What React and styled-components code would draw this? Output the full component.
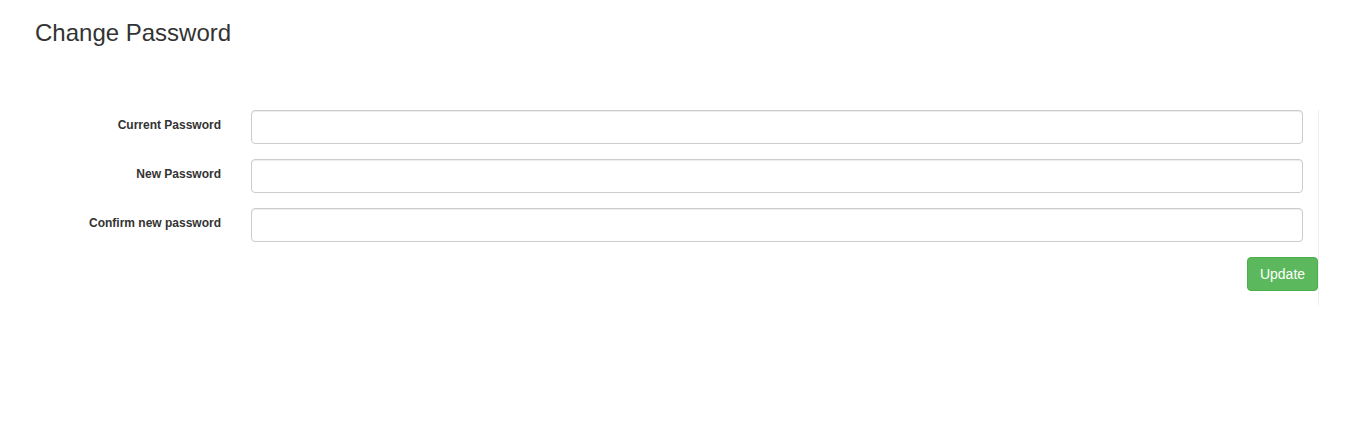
import React from 'react';
import styled, {createGlobalStyle} from "styled-components";

const GlobalStyle = createGlobalStyle`
    body {
        margin: 0;
        background: #fff;
        font-family: "Liberation Sans", Arial, sans-serif;
        color: #333;
    }
`;

const Page = styled.div`
    width: 1369px;
    height: 433px;
`;

const Title = styled.h3`
    margin: 0;
    padding: 20px 0 0 35px;
    font-size: 24px;
    font-weight: 400;
    line-height: 1.1;
    color: #333;
`;

const Form = styled.form`
    display: flex;
    flex-direction: column;
    gap: 15px;
    width: 1318px;
    margin-top: 64px;
    padding-bottom: 14px;
    border-right: 1px solid #eee;
`;

const Row = styled.div`
    display: grid;
    grid-template-columns: 221px 1fr;
    column-gap: 30px;
    padding-right: 15px;
`;

const Label = styled.label`
    padding-top: 7px;
    text-align: right;
    font-size: 12px;
    font-weight: 700;
    line-height: 17px;
    color: #333;
`;

const Input = styled.input`
    box-sizing: border-box;
    width: 100%;
    height: 34px;
    padding: 6px 12px;
    border: 1px solid #ccc;
    border-radius: 4px;
    font-family: inherit;
    font-size: 14px;
    box-shadow: inset 0 1px 1px rgba(0,0,0,.075);
    outline: none;
`;

const Actions = styled.div`
    display: flex;
    justify-content: flex-end;
`;

const Button = styled.button`
    height: 34px;
    width: 71px;
    padding: 0;
    border: 1px solid #4cae4c;
    border-radius: 4px;
    background: #5cb85c;
    color: #fff;
    font-family: inherit;
    font-size: 14px;
    cursor: pointer;
`;

const fields = ["Current Password", "New Password", "Confirm new password"];

const App = () => {
    return (
        <Page>
            <GlobalStyle/>
            <Title>Change Password</Title>
            <Form onSubmit={e => e.preventDefault()}>
                {fields.map(f => (
                    <Row key={f}>
                        <Label>{f}</Label>
                        <Input type="password"/>
                    </Row>
                ))}
                <Actions>
                    <Button type="submit">Update</Button>
                </Actions>
            </Form>
        </Page>
    );
};

export default App;
